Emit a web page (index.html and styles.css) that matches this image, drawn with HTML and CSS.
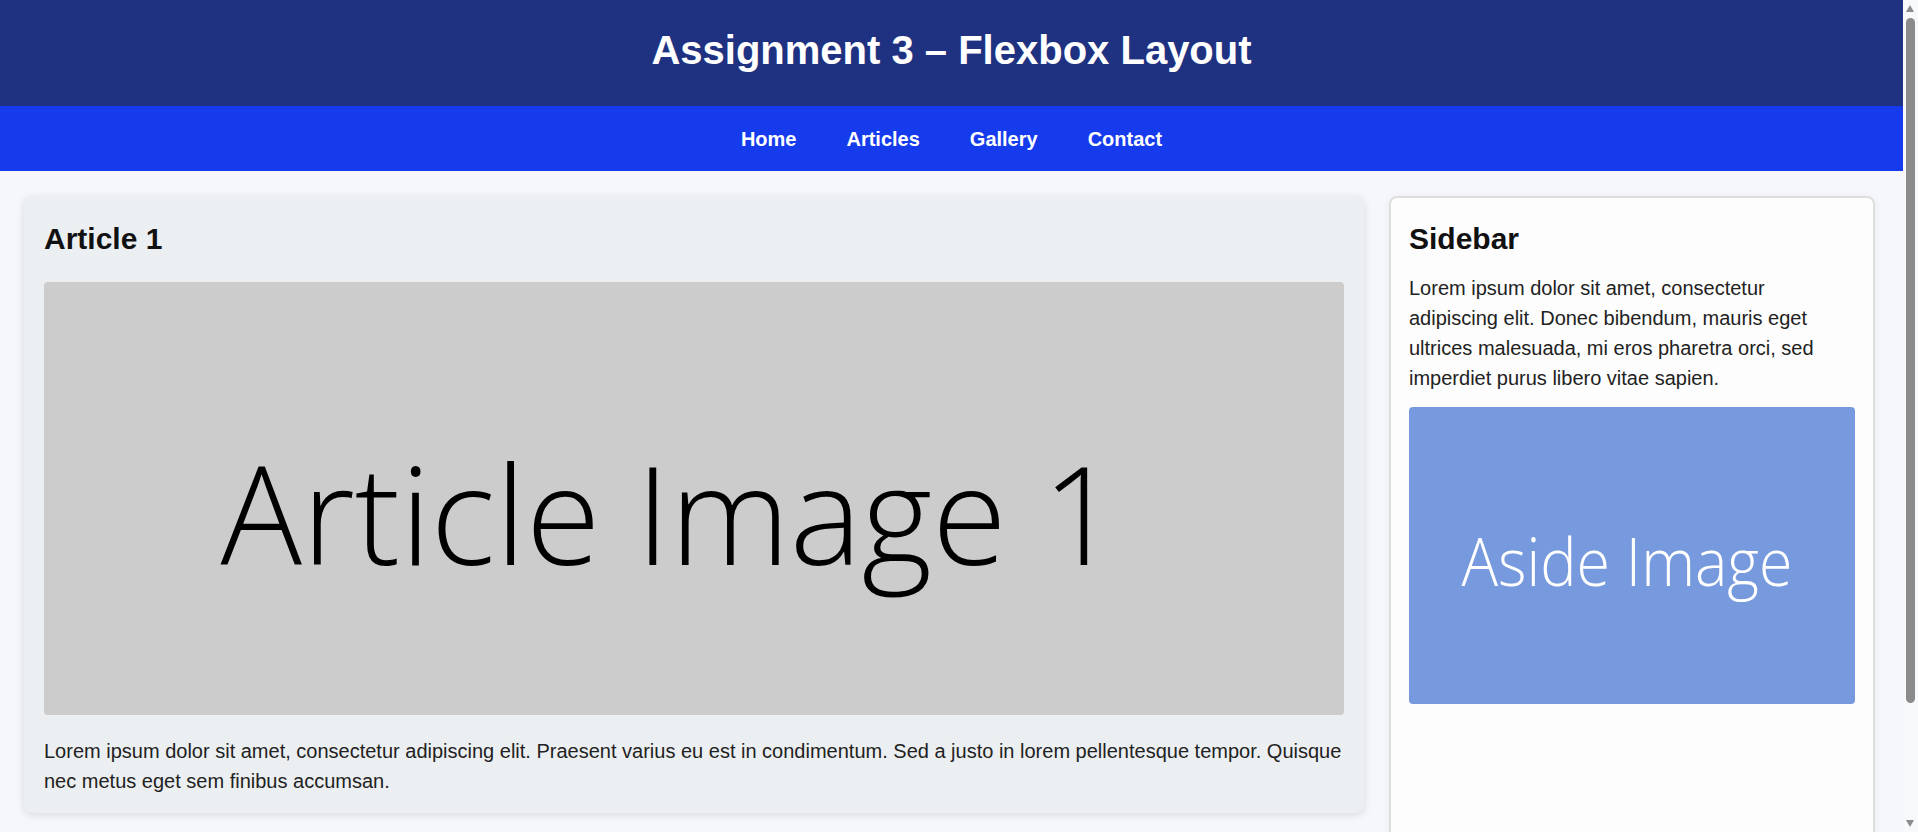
FILE: index.html
```html
<!DOCTYPE html>
<html lang="en">
<head>
<meta charset="utf-8">
<title>Assignment 3 – Flexbox Layout</title>
<link rel="stylesheet" href="styles.css">
</head>
<body>
<div class="page">
  <header class="site-header">
    <h1 class="site-title">Assignment 3 – Flexbox Layout</h1>
  </header>
  <nav class="site-nav">
    <ul class="nav-list">
      <li><a class="nav-link" href="#">Home</a></li>
      <li><a class="nav-link" href="#">Articles</a></li>
      <li><a class="nav-link" href="#">Gallery</a></li>
      <li><a class="nav-link" href="#">Contact</a></li>
    </ul>
  </nav>
  <main class="layout">
    <article class="card article">
      <h2 class="card-title">Article 1</h2>
      <svg class="ph ph-article" viewBox="0 0 1300 433.3" role="img" aria-label="Article Image 1">
        <rect width="1300" height="433.3" fill="#cccccc"/>
        <text x="626" y="283" text-anchor="middle" textLength="899" lengthAdjust="spacingAndGlyphs" class="ph-text ph-text-dark">Article Image 1</text>
      </svg>
      <p class="article-text">Lorem ipsum dolor sit amet, consectetur adipiscing elit. Praesent varius eu est in condimentum. Sed a justo in lorem pellentesque tempor. Quisque nec metus eget sem finibus accumsan.</p>
    </article>
    <aside class="card sidebar">
      <h2 class="card-title sidebar-title">Sidebar</h2>
      <p class="sidebar-text">Lorem ipsum dolor sit amet, consectetur adipiscing elit. Donec bibendum, mauris eget ultrices malesuada, mi eros pharetra orci, sed imperdiet purus libero vitae sapien.</p>
      <svg class="ph ph-aside" viewBox="0 0 446 297.3" role="img" aria-label="Aside Image">
        <rect width="446" height="297.3" fill="#7799dd"/>
        <text x="218" y="179" text-anchor="middle" textLength="331" lengthAdjust="spacingAndGlyphs" class="ph-text ph-text-light ph-text-small">Aside Image</text>
      </svg>
    </aside>
  </main>
</div>
<div class="scrollbar" aria-hidden="true">
  <span class="sb-arrow sb-up"></span>
  <span class="sb-thumb"></span>
  <span class="sb-arrow sb-down"></span>
</div>
</body>
</html>
```

FILE: styles.css
```css
html, body {
  margin: 0;
  padding: 0;
}

body {
  font-family: "Liberation Sans", Arial, sans-serif;
  font-size: 20px;
  line-height: 1.5;
  color: #222;
  background: #f5f7fa;
}

.page {
  margin-right: 15px;
}

.site-header {
  background: #1f3282;
  color: #fff;
  text-align: center;
  padding: 27px 0 33px;
}

.site-title {
  margin: 0;
  font-size: 40px;
  font-weight: 700;
  line-height: 46px;
}

.site-nav {
  background: #153bed;
  padding: 17.5px 0;
}

.nav-list {
  list-style: none;
  margin: 0;
  padding: 0;
  display: flex;
  justify-content: center;
  gap: 50px;
}

.nav-link {
  color: #fff;
  text-decoration: none;
  font-weight: 700;
  font-size: 20px;
  line-height: 30px;
  display: block;
}

.layout {
  display: flex;
  align-items: flex-start;
  gap: 25px;
  padding: 25px 28px 25px 24px;
}

.card {
  border-radius: 8px;
  box-sizing: border-box;
}

.article {
  flex: 1 1 auto;
  min-width: 0;
  background: #eceff1;
  padding: 20px 20px 17px;
  box-shadow: 0 2px 8px rgba(0, 0, 0, 0.12);
}

.sidebar {
  flex: 0 0 486px;
  width: 486px;
  min-height: 754px;
  background: #fdfdfd;
  border: 2px solid #dedede;
  padding: 18px;
  box-shadow: 0 2px 8px rgba(0, 0, 0, 0.06);
}

.card-title {
  margin: 0 0 21px;
  font-size: 30px;
  font-weight: 700;
  line-height: 45px;
  color: #111;
}

.sidebar-title {
  margin-bottom: 12px;
}

.ph {
  display: block;
  width: 100%;
  height: auto;
  border-radius: 4px;
}

.ph-text {
  font-family: "Open Sans", "DejaVu Sans", sans-serif;
  font-weight: 300;
  font-size: 137px;
}

.ph-text-small {
  font-size: 66px;
}

.ph-text-dark {
  fill: #000;
}

.ph-text-light {
  fill: #fff;
}

.article-text {
  margin: 21px 0 0;
  line-height: 30px;
}

.sidebar-text {
  margin: 0 0 14px;
  line-height: 30px;
}

/* simulated browser scrollbar overlaying the right edge */
.scrollbar {
  position: fixed;
  top: 0;
  right: 0;
  width: 15px;
  height: 100vh;
  background: #f8f9fa;
}

.sb-thumb {
  position: absolute;
  top: 18px;
  left: 3px;
  width: 9px;
  height: 685px;
  background: #8b8b8b;
  border-radius: 5px;
}

.sb-arrow {
  position: absolute;
  left: 3px;
  width: 0;
  height: 0;
  border-left: 4.5px solid transparent;
  border-right: 4.5px solid transparent;
}

.sb-up {
  top: 5px;
  border-bottom: 7px solid #8b8b8b;
}

.sb-down {
  bottom: 5px;
  border-top: 7px solid #8b8b8b;
}
```
